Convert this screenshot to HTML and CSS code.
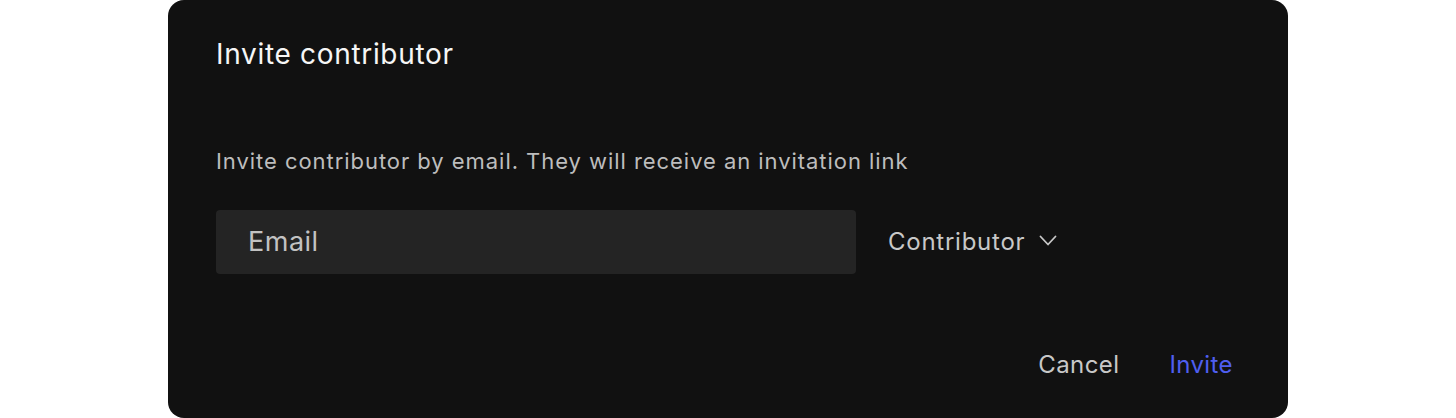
FILE: index.html
```html
<!DOCTYPE html>
<html lang="en">
<head>
<meta charset="utf-8">
<title>Invite contributor</title>
<link rel="stylesheet" href="styles.css">
</head>
<body>
<div class="dialog">
  <h2 class="title">Invite contributor</h2>
  <p class="desc">Invite contributor by email. They will receive an invitation link</p>
  <div class="row">
    <div class="input">Email</div>
    <div class="select">
      <span>Contributor</span>
      <svg width="18" height="12" viewBox="0 0 18 12" fill="none"><path d="M1.5 1.5l7.5 8 7.5-8" stroke="#c8c8c8" stroke-width="1.8" stroke-linecap="round" stroke-linejoin="round"/></svg>
    </div>
  </div>
  <div class="actions">
    <button class="btn cancel">Cancel</button>
    <button class="btn invite">Invite</button>
  </div>
</div>
</body>
</html>
```
FILE: styles.css
```css
html, body {
  margin: 0;
  padding: 0;
  background: #ffffff;
}
body {
  font-family: Inter, "Noto Sans", sans-serif;
  display: flex;
  justify-content: center;
}
.dialog {
  width: 1120px;
  height: 418px;
  box-sizing: border-box;
  background: #111111;
  border-radius: 16px;
  padding: 36px 48px 0 48px;
  display: flex;
  flex-direction: column;
}
.title {
  margin: 0;
  font-size: 28px;
  font-weight: 400;
  line-height: 36px;
  letter-spacing: 0.68px;
  color: #f6f6f6;
}
.desc {
  margin: 74px 0 0 0;
  font-size: 22px;
  line-height: 30px;
  letter-spacing: 0.95px;
  color: #bdbdbd;
  font-weight: 400;
}
.row {
  margin-top: 34px;
  display: flex;
  align-items: center;
  gap: 32px;
}
.input {
  width: 640px;
  height: 64px;
  box-sizing: border-box;
  background: #242424;
  border-radius: 4px;
  padding-left: 32px;
  display: flex;
  align-items: center;
  font-size: 27px;
  line-height: 34px;
  letter-spacing: 0.5px;
  color: #c2c2c2;
}
.select {
  display: flex;
  align-items: center;
  gap: 14px;
  font-size: 24px;
  line-height: 32px;
  letter-spacing: 0.75px;
  color: #c8c8c8;
}
.select svg {
  display: block;
  margin-top: -2px;
}
.actions {
  margin-top: auto;
  margin-bottom: 37px;
  display: flex;
  justify-content: flex-end;
  gap: 50px;
  padding-right: 7px;
}
.btn {
  background: none;
  border: none;
  padding: 0;
  font-family: inherit;
  font-size: 24px;
  line-height: 32px;
  letter-spacing: 0.4px;
  cursor: pointer;
}
.cancel { color: #c8c8c8; }
.invite { color: #4f5ff0; }
```
